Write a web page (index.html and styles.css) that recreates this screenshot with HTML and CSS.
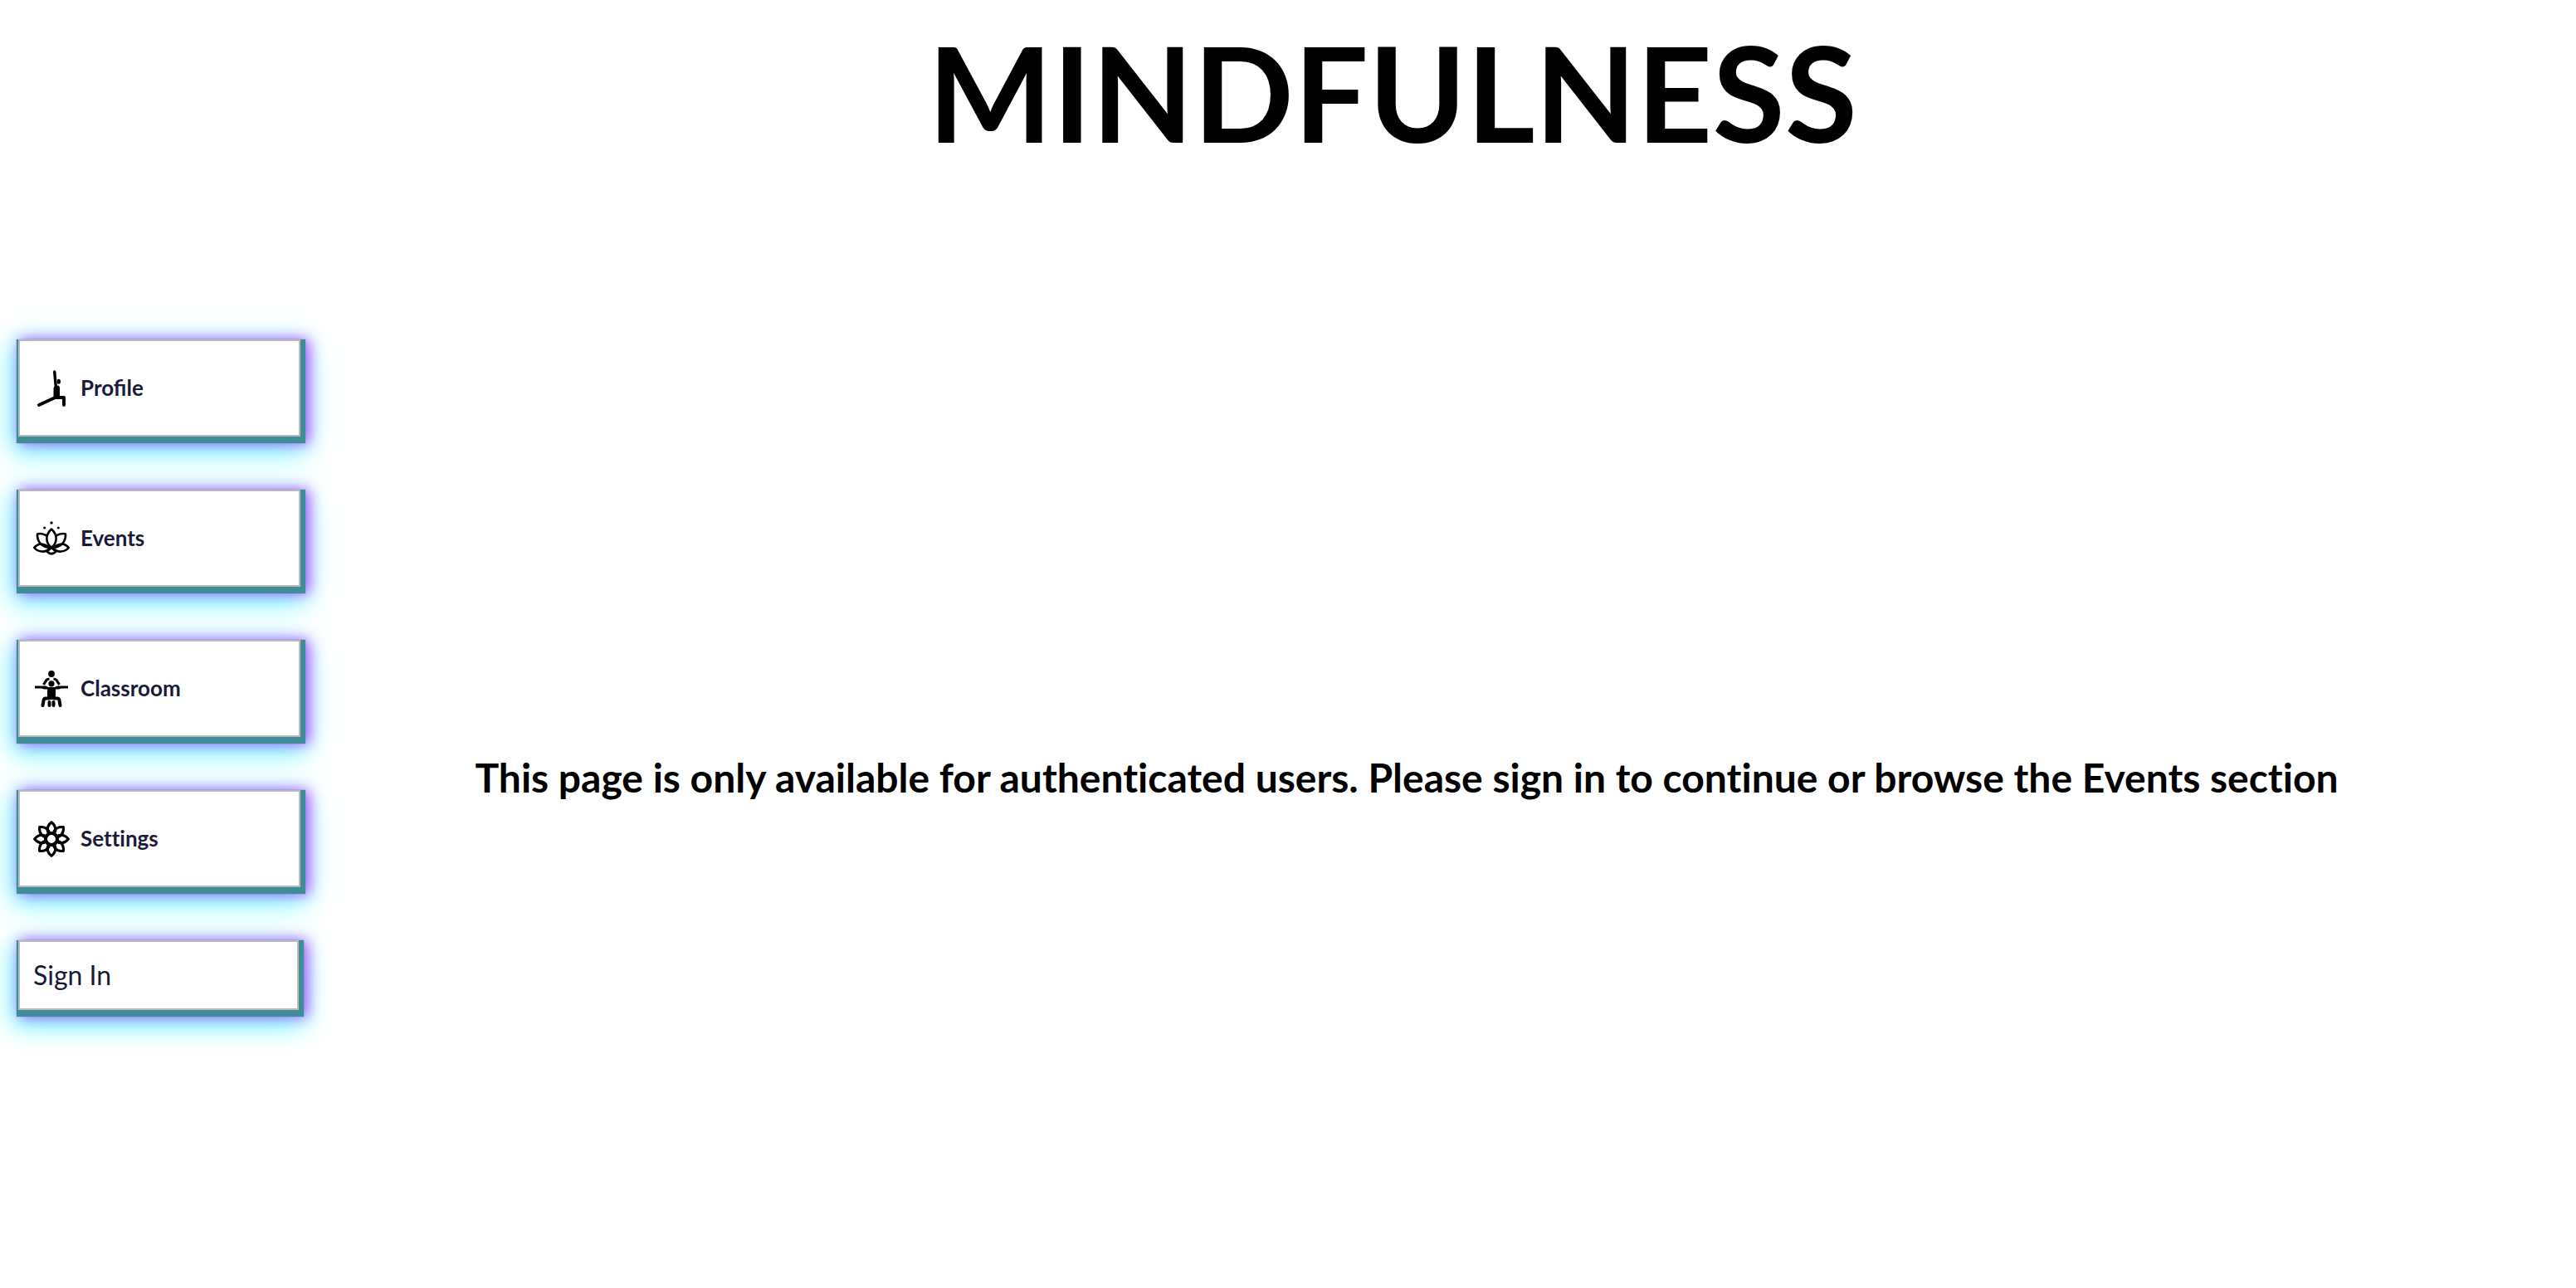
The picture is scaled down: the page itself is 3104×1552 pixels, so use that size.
FILE: index.html
```html
<!DOCTYPE html>
<html lang="en">
<head>
<meta charset="utf-8">
<meta name="viewport" content="width=device-width, initial-scale=1">
<title>Mindfulness</title>
<link rel="stylesheet" href="styles.css">
</head>
<body>
<header class="header"><h1 class="title">MINDFULNESS</h1></header>
<div class="layout">
  <nav class="menu" aria-label="Main">
    <a class="card" href="#profile">
      <svg class="icon" viewBox="0 0 44 44" fill="none" stroke="#000" stroke-linecap="round" stroke-linejoin="round" aria-hidden="true">
        <path d="M25.700 2L27.500 22" stroke-width="3.400"/>
        <path d="M24.500 22.500q0-3 3-3.500l3-.5q1.500 1 1.500 3V35h-7.500z" fill="#000" stroke="none"/>
        <ellipse cx="30.800" cy="13.700" rx="2.200" ry="3" fill="#000" stroke="none"/>
        <path d="M7 42L26.500 33H37v9" stroke-width="4"/>
      </svg>
      <span class="label">Profile</span>
    </a>
    <a class="card" href="#events">
      <svg class="icon" viewBox="0 0 44 44" fill="none" stroke="#000" stroke-width="2.600" stroke-linejoin="round" aria-hidden="true">
        <g fill="#000" stroke="none"><circle cx="22" cy="3" r="1.700"/><circle cx="13.700" cy="9" r="1.600"/><circle cx="30.300" cy="9" r="1.600"/></g>
        <path d="M22 10.500C14 18 15 27.500 22 32.500C29 27.500 30 18 22 10.500z"/>
        <path d="M16.500 18.500C12 16 8 15.500 5 16.500C4.500 25 9.500 32 20.500 33M27.500 18.500C32 16 36 15.500 39 16.500C39.500 25 34.500 32 23.500 33"/>
        <path d="M8 28.500C5 29.500 2.500 31 1.300 33C6 38.500 14.500 39.500 20.500 33.500C16 29.500 12 28.500 8 28.500zM36 28.500C39 29.500 41.500 31 42.700 33C38 38.500 29.500 39.500 23.500 33.500C28 29.500 32 28.500 36 28.500z"/>
        <path d="M22 33L16.500 37.500Q22 43 27.500 37.500z"/>
      </svg>
      <span class="label">Events</span>
    </a>
    <a class="card" href="#classroom">
      <svg class="icon" viewBox="0 0 44 44" fill="none" stroke="#000" aria-hidden="true">
        <g fill="#000" stroke="none">
          <circle cx="22" cy="4" r="3.900"/>
          <circle cx="22" cy="15.800" r="3.600"/>
          <path d="M2 18.500H15L18 20H26L29 18.500H42V21.500H34L31 22.500H27V35H17V22.500H13L10 21.500H2z"/>
        </g>
        <path d="M12.500 17L16 11.500Q17 10.200 19.500 10M31.500 17L28 11.500Q27 10.200 24.500 10" stroke-width="3.200"/>
        <path d="M19 33.500H15Q13 33.500 12.500 36L11.500 42M25 33.500H29Q31 33.500 31.500 36L32.500 42" stroke-width="4" stroke-linecap="round"/>
        <path d="M19.500 38V42M24.500 38V42" stroke-width="4" stroke-linecap="round"/>
      </svg>
      <span class="label">Classroom</span>
    </a>
    <a class="card" href="#settings">
      <svg class="icon" viewBox="0 0 44 44" fill="none" stroke="#000" stroke-width="3.200" stroke-linejoin="round" aria-hidden="true">
        <defs><path id="petal" d="M17.500 13C16.500 8 19 4 22 1.700C25 4 27.500 8 26.500 13Q22 17.500 17.500 13z"/></defs>
        <use href="#petal"/><use href="#petal" transform="rotate(45 22 22)"/><use href="#petal" transform="rotate(90 22 22)"/><use href="#petal" transform="rotate(135 22 22)"/><use href="#petal" transform="rotate(180 22 22)"/><use href="#petal" transform="rotate(225 22 22)"/><use href="#petal" transform="rotate(270 22 22)"/><use href="#petal" transform="rotate(315 22 22)"/>
        <circle cx="22" cy="22" r="7" stroke-width="4"/>
      </svg>
      <span class="label label-plain">Settings</span>
    </a>
    <button class="card card-button" type="button">Sign In</button>
  </nav>
  <main class="content">
    <h2 class="message">This page is only available for authenticated users. Please sign in to continue or browse the Events section</h2>
  </main>
</div>
</body>
</html>
```
FILE: styles.css
```css
* {
  box-sizing: border-box;
}

body {
  margin: 0;
  background: #fff;
  color: #000;
  font-family: Lato, sans-serif;
}

.header {
  padding: 15px 0 0 252px;
}

.title {
  margin: 0;
  font-size: 159px;
  line-height: 192px;
  font-weight: 700;
  text-align: center;
}

.layout {
  display: grid;
  grid-template-columns: 362px 1fr;
  padding: 202px 0 80px;
}

.menu {
  display: flex;
  flex-direction: column;
  gap: 64px;
  padding-left: 22px;
}

.card {
  display: flex;
  align-items: center;
  gap: 13px;
  min-height: 117px;
  padding: 16px;
  border: 2px solid #bbb;
  background: #fff;
  color: #1a1a3a;
  font-family: inherit;
  text-decoration: none;
  box-shadow:
    2px 4px 1px 4px #408c98,
    6px 4px 16px 4px #b848ff,
    0 12px 32px 6px #58f6ff;
}

.card-button {
  min-height: 84px;
  margin-right: 2px;
  font-size: 32px;
  line-height: 40px;
}

.icon {
  width: 44px;
  height: 44px;
  flex: none;
}

.label {
  padding-bottom: 2px;
  font-size: 26px;
  line-height: 32px;
  font-weight: 700;
}

.content {
  padding: 496px 76px 0 0;
}

.message {
  margin: 0;
  font-size: 48px;
  line-height: 64px;
  font-weight: 700;
  text-align: center;
}

.label-plain,
.message {
  font-variant-ligatures: none;
}
```
